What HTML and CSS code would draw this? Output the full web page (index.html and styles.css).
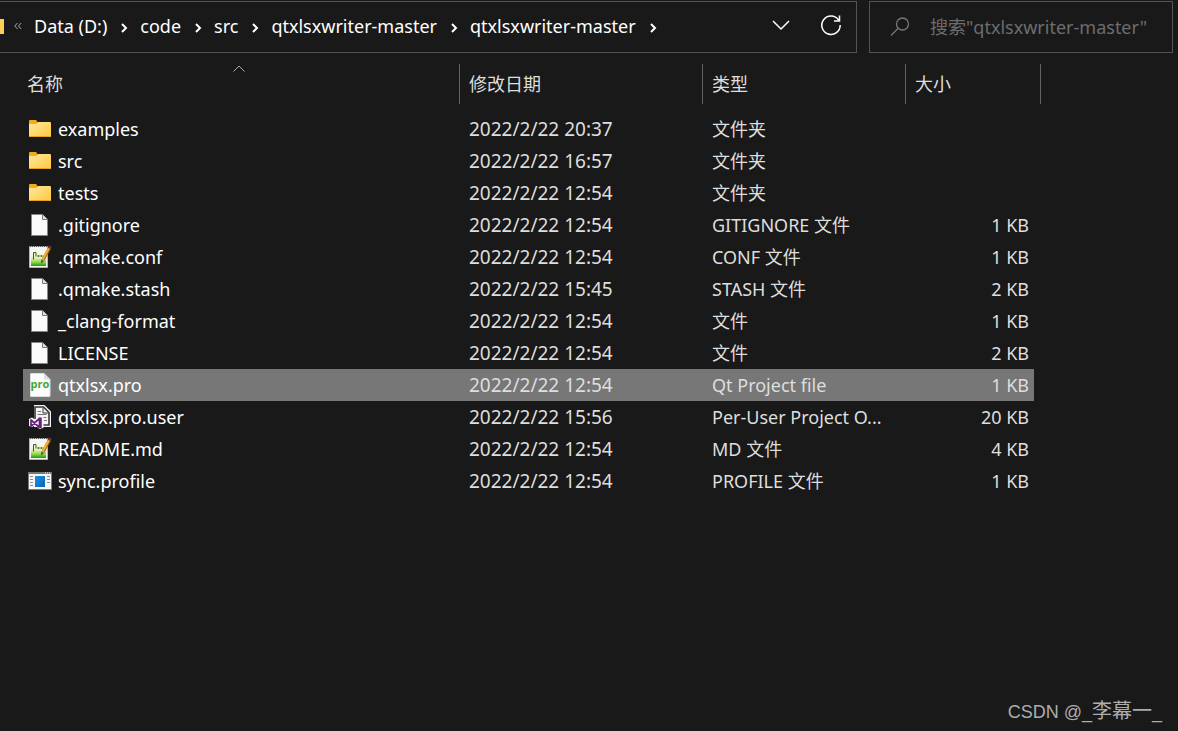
FILE: index.html
```
<!DOCTYPE html>
<html lang="zh-CN">
<head>
<meta charset="utf-8">
<title>qtxlsxwriter-master</title>
<link rel="stylesheet" href="styles.css">
</head>
<body>
<svg class="defs" aria-hidden="true">
  <defs>
    <linearGradient id="gold" x1="0" y1="0" x2="1" y2="1"><stop offset="0" stop-color="#ffe9a0"/><stop offset="1" stop-color="#ffc83d"/></linearGradient>
    <linearGradient id="green" x1="0" y1="0" x2="0" y2="1"><stop offset="0" stop-color="#fbfdf2"/><stop offset=".45" stop-color="#e2f5b4"/><stop offset=".75" stop-color="#8fd34c"/><stop offset="1" stop-color="#169a1c"/></linearGradient>
    <linearGradient id="blue" x1="0" y1="0" x2="1" y2="1"><stop offset="0" stop-color="#1c93e0"/><stop offset="1" stop-color="#0a62b8"/></linearGradient>
    <symbol id="folder" viewBox="0 0 24 24">
      <path d="M1 4q0-1 1-1h6l1.500 2v3H1z" fill="#f5ac12"/>
      <path d="M1 7h7l2-2h12q1 0 1 1v13q0 1-1 1H2q-1 0-1-1z" fill="url(#gold)"/>
      <path d="M1 19.500h22" stroke="#e5a126"/>
    </symbol>
    <symbol id="file" viewBox="0 0 24 24">
      <path d="M3.500 1.500h11l5 5v16h-16z" fill="#fafafa" stroke="#858585"/>
      <path d="M14.500 1.500v5h5" fill="#e4e4e4" stroke="#777"/>
    </symbol>
    <symbol id="notepad" viewBox="0 0 24 24">
      <path d="M1.500 1.500h18v21h-18z" fill="#f6f6f0" stroke="#b5b5b0"/>
      <path d="M3 6h15v15H3z" fill="url(#green)"/>
      <path d="M2 1.500h18" stroke="#555" stroke-dasharray="1 1"/>
      <path d="M5.500 7.500v7M8 7.500v4M5.500 7.500h2.500" fill="none" stroke="#4a4a4a"/>
      <path d="M9.500 11h2M12.500 11h2" stroke="#4a4a4a" stroke-width="1.500"/>
      <path d="M21.500 3L15 15" stroke="#ae6b12" stroke-width="3.200"/>
      <path d="M21 3l-6.500 12" stroke="#f6b22e" stroke-width="1.800"/>
      <path d="M20.200 1.500l3 1.600" stroke="#6d3940" stroke-width="2.500"/>
      <path d="M13.200 14.500l2.800 1.500-3 2.500z" fill="#67502b"/>
    </symbol>
    <symbol id="pro" viewBox="0 0 24 24">
      <path d="M2.500 1q0-.5.500-.5h13l6 6V23q0 .5-.5.500H3q-.5 0-.5-.5z" fill="#fcfcfc" stroke="#ddd"/>
      <path d="M16 .5v6h6z" fill="#dedede"/>
      <text x="12" y="15" text-anchor="middle" class="pro-label">pro</text>
    </symbol>
    <symbol id="visual" viewBox="0 0 24 24">
      <path d="M7 1h9l6 6v14H7z" fill="#f4f4f4" stroke="#f4f4f4" stroke-width="2"/>
      <path d="M7 14V2h8.500L21 7.500V20h-6" fill="#f4f4f4" stroke="#383838" stroke-width="1.600"/>
      <path d="M15 2.500V8h5.500" fill="none" stroke="#383838"/>
      <path d="M9.500 6.500h3.500M9.500 9.500h9M9.500 12.500h9M16 15.500h3" stroke="#777"/>
      <path d="M1 14l3-1.500 3 2 4.500-4 4 1.700v10.600l-4 1.200-4.500-4-3 2L1 21z" fill="#f6f2f8"/>
      <path d="M3 15v6l8.500-7.500v9z" fill="none" stroke="#68217a" stroke-width="1.700" stroke-linejoin="round"/>
      <path d="M12.500 12.500v10.500" stroke="#68217a" stroke-width="2.500"/>
    </symbol>
    <symbol id="program" viewBox="0 0 24 24">
      <path d="M.5 3.500h23v17H.5z" fill="#f7f7f7" stroke="#7b7b7b"/>
      <path d="M0 4h24" stroke="#777" stroke-width="2"/>
      <path d="M17 4h1M19 4h1M21 4h1" stroke="#eee"/>
      <path d="M7 7h10v11H7z" fill="url(#blue)"/>
      <path d="M2 7.500h3M2 10.500h3M2 13.500h3M2 16.500h3M19 7.500h3M19 10.500h3M19 13.500h3" stroke="#8d8d8d"/>
    </symbol>
    <symbol id="sep" viewBox="0 0 8 12"><path d="M2 2l4 4-4 4" fill="none" stroke="#fff" stroke-width="2"/></symbol>
  </defs>
</svg>
<header class="toolbar">
  <nav class="address" aria-label="路径">
    <span class="place"></span>
    <button class="overflow" aria-label="更多"><svg width="8" height="8" viewBox="0 0 8 8"><path d="M3.500 1L.8 4l2.700 3M7.200 1L4.500 4l2.700 3"/></svg></button>
    <a href="#">Data (D:)</a><svg class="sep"><use href="#sep"/></svg>
    <a href="#">code</a><svg class="sep"><use href="#sep"/></svg>
    <a href="#">src</a><svg class="sep"><use href="#sep"/></svg>
    <a href="#">qtxlsxwriter-master</a><svg class="sep"><use href="#sep"/></svg>
    <a href="#">qtxlsxwriter-master</a><svg class="sep"><use href="#sep"/></svg>
    <div class="actions">
      <button aria-label="历史"><svg width="20" height="20" viewBox="0 0 20 20"><path d="M2 5l8 8 8-8"/></svg></button>
      <button aria-label="刷新"><svg width="24" height="24" viewBox="0 0 24 24"><path d="M19.600 6A9.200 9.200 0 1 0 21.200 11M20.500 1.500v5.500h-5.500"/></svg></button>
    </div>
  </nav>
  <label class="search">
    <svg width="20" height="20" viewBox="0 0 20 20"><circle cx="12.500" cy="7" r="6"/><path d="M8 11.500L1 18.500"/></svg>
    <input type="text" aria-label="搜索" placeholder='搜索"qtxlsxwriter-master"'>
  </label>
</header>
<main>
  <table class="files">
    <colgroup><col><col class="c-date"><col class="c-type"><col class="c-size"><col class="c-end"></colgroup>
    <thead>
      <tr>
        <th class="sorted"><button>名称</button><svg class="sort" width="12" height="7" viewBox="0 0 12 7"><path d="M.5 6.500L6 1l5.500 5.500"/></svg></th>
        <th><button>修改日期</button></th>
        <th><button>类型</button></th>
        <th colspan="2"><button>大小</button></th>
      </tr>
    </thead>
    <tbody>
      <tr><td><span class="name"><svg><use href="#folder"/></svg>examples</span></td><td>2022/2/22 20:37</td><td>文件夹</td><td></td></tr>
      <tr><td><span class="name"><svg><use href="#folder"/></svg>src</span></td><td>2022/2/22 16:57</td><td>文件夹</td><td></td></tr>
      <tr><td><span class="name"><svg><use href="#folder"/></svg>tests</span></td><td>2022/2/22 12:54</td><td>文件夹</td><td></td></tr>
      <tr><td><span class="name"><svg><use href="#file"/></svg>.gitignore</span></td><td>2022/2/22 12:54</td><td>GITIGNORE 文件</td><td>1 KB</td></tr>
      <tr><td><span class="name"><svg><use href="#notepad"/></svg>.qmake.conf</span></td><td>2022/2/22 12:54</td><td>CONF 文件</td><td>1 KB</td></tr>
      <tr><td><span class="name"><svg><use href="#file"/></svg>.qmake.stash</span></td><td>2022/2/22 15:45</td><td>STASH 文件</td><td>2 KB</td></tr>
      <tr><td><span class="name"><svg><use href="#file"/></svg>_clang-format</span></td><td>2022/2/22 12:54</td><td>文件</td><td>1 KB</td></tr>
      <tr><td><span class="name"><svg><use href="#file"/></svg>LICENSE</span></td><td>2022/2/22 12:54</td><td>文件</td><td>2 KB</td></tr>
      <tr class="selected"><td><span class="name"><svg><use href="#pro"/></svg>qtxlsx.pro</span></td><td>2022/2/22 12:54</td><td>Qt Project file</td><td>1 KB</td></tr>
      <tr><td><span class="name"><svg><use href="#visual"/></svg>qtxlsx.pro.user</span></td><td>2022/2/22 15:56</td><td>Per-User Project O...</td><td>20 KB</td></tr>
      <tr><td><span class="name"><svg><use href="#notepad"/></svg>README.md</span></td><td>2022/2/22 12:54</td><td>MD 文件</td><td>4 KB</td></tr>
      <tr><td><span class="name"><svg><use href="#program"/></svg>sync.profile</span></td><td>2022/2/22 12:54</td><td>PROFILE 文件</td><td>1 KB</td></tr>
    </tbody>
  </table>
</main>
<footer>CSDN @_<span class="author">李幕一</span>_</footer>
</body>
</html>
```
FILE: styles.css
```
* { box-sizing: border-box; }
body {
  margin: 0;
  min-height: 100vh;
  display: flex;
  flex-direction: column;
  background: #191919;
  color: #dedede;
  font: 18px/32px "Noto Sans", "Noto Sans CJK SC", sans-serif;
}
button, input {
  border: 0;
  padding: 0;
  background: none;
  color: inherit;
  font: inherit;
}
svg { fill: none; flex: none; }
.defs { position: absolute; width: 0; height: 0; }

.toolbar { display: flex; gap: 12px; padding: 1px 5px 0 0; }
.address, .search {
  display: flex;
  align-items: center;
  height: 52px;
  border: 1px solid #535353;
}
.address { flex: 1; padding-bottom: 2px; border-left: 0; color: #fff; white-space: nowrap; }
.place { width: 4px; height: 15px; background: #ffcf55; }
.overflow { display: flex; margin: 0 12px 0 10px; stroke: #aaa; }
.address a { color: inherit; text-decoration: none; }
.sep { width: 8px; height: 12px; margin: 3px 12px 0 13px; }
.actions { display: flex; gap: 28px; margin-left: auto; padding-right: 13px; }
.actions button { display: flex; align-items: center; }
.actions svg { stroke: #fff; stroke-width: 1.5; }
.search { width: 304px; padding: 0 20px; gap: 20px; color: #6d6d6d; }
.search svg { stroke: #777; stroke-width: 1.3; }
.search input { flex: 1; min-width: 0; outline: 0; }
.search input::placeholder { color: #6d6d6d; opacity: 1; }

main { flex: 1; padding: 11px 137px 0 23px; border-left: 1px solid #202020; margin-left: -1px; }
.files { width: 100%; table-layout: fixed; border-spacing: 0; }
.c-date { width: 243px; }
.c-type { width: 203px; }
.c-size { width: 128px; }
.c-end { width: 7px; }
th { padding: 0 0 9px; font-weight: 400; }
th button {
  display: block;
  width: 100%;
  height: 40px;
  padding-left: 9px;
  border-right: 1px solid #636363;
  text-align: left;
}
th:first-child button { padding-left: 4px; }
.sorted { position: relative; }
.sort { position: absolute; top: 1px; left: 210px; stroke: #aaa; }
td { height: 32px; padding: 0 0 0 9px; white-space: nowrap; }
td:first-child { padding-left: 5px; color: #fff; }
td:nth-child(2) { font-size: 19px; }
td:nth-child(4) { padding: 0 5px 0 0; text-align: right; }
.name { display: flex; align-items: center; gap: 6px; }
.name svg { width: 24px; height: 24px; }
.pro-label { fill: #3fa92c; font: 700 11px "Open Sans", sans-serif; }
.selected td { background: #777; }

footer { padding: 0 16px 3px; text-align: right; color: #adadad; font-family: "Liberation Sans", "Noto Sans CJK SC", sans-serif; }
.author { font-size: 20px; }
```
